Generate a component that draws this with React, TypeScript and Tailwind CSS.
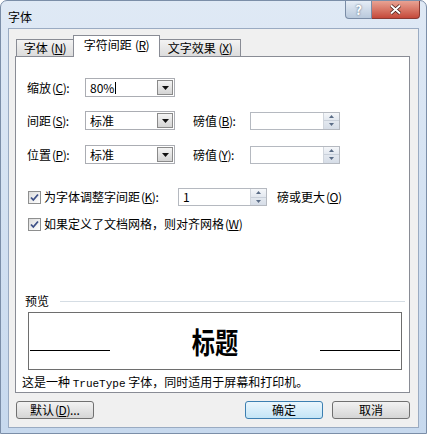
import React from "react";

const font = "font-['Noto_Sans_CJK_SC',sans-serif]";

function Acc({ k, gap }: { k: string; gap?: boolean }) {
  return (
    <span className={`tracking-[-0.5px] ${gap ? "ml-[3px]" : "ml-[1px]"}`}>
      (<span className="underline underline-offset-1">{k}</span>)
    </span>
  );
}

function Select({ value, caret }: { value: string; caret?: boolean }) {
  return (
    <div className="flex h-[19px] w-[90px] border border-[#abadb3] bg-white">
      <div className="flex flex-1 items-center pl-[4px] text-[12px] leading-[17px]">
        {value}
        {caret && <span className="ml-[1px] h-[12px] w-[1px] bg-black" />}
      </div>
      <div className="m-[1px] flex w-[16px] items-center justify-center border border-[#8a8a8a] bg-linear-to-b from-[#f4f4f4] to-[#d4d4d4]">
        <svg width="7" height="4" viewBox="0 0 7 4">
          <path d="M0 0h7L3.5 4z" fill="#111" />
        </svg>
      </div>
    </div>
  );
}

function Spin({ value, w = 90 }: { value?: string; w?: number }) {
  return (
    <div
      className={`flex h-[18px] border border-[#b5b9c0] bg-white ${w === 90 ? "w-[90px]" : "w-[89px]"}`}
    >
      <div className="flex-1 pl-[4px] text-[12px] leading-[16px]">{value}</div>
      <div className="flex w-[16px] flex-col border-l border-[#d0d5dc]">
        <div className="flex flex-1 items-center justify-center bg-linear-to-b from-[#f5f7fa] to-[#e3e8ef]">
          <svg width="5" height="3" viewBox="0 0 5 3">
            <path d="M0 3h5L2.5 0z" fill="#5a6c86" />
          </svg>
        </div>
        <div className="h-px bg-[#c9d0da]" />
        <div className="flex flex-1 items-center justify-center bg-linear-to-b from-[#e3e8ef] to-[#d6dde7]">
          <svg width="5" height="3" viewBox="0 0 5 3">
            <path d="M0 0h5L2.5 3z" fill="#5a6c86" />
          </svg>
        </div>
      </div>
    </div>
  );
}

function Check() {
  return (
    <div className="flex h-[13px] w-[13px] items-center justify-center border border-[#8e8f8f] bg-linear-to-br from-[#dcdcdc] to-[#ffffff]">
      <svg width="9" height="9" viewBox="0 0 9 9">
        <path d="M1 4.5l2.3 2.5L8 1.5" stroke="#3c4f86" strokeWidth="1.8" fill="none" />
      </svg>
    </div>
  );
}

function Button({ label, primary }: { label: React.ReactNode; primary?: boolean }) {
  return (
    <div
      className={`flex h-[18px] w-[78px] items-center justify-center rounded-[3px] border text-[12px] leading-[16px] ${
        primary
          ? "border-[#3c7fb1] bg-linear-to-b from-[#eaf6fd] to-[#c4e5f6]"
          : "border-[#707070] bg-linear-to-b from-[#f2f2f2] to-[#d5d5d5]"
      }`}
    >
      {label}
    </div>
  );
}

export default function App() {
  return (
    <div
      className={`flex h-[434px] w-[427px] flex-col rounded-t-[7px] border border-[#7b8ea8] bg-linear-to-b from-[#dfe9f5] to-[#c7d9ee] text-black ${font}`}
    >
      {/* title bar */}
      <div className="flex h-[28px] items-start justify-between pl-[7px] pr-[6px]">
        <div className="self-center pt-[4px] text-[12px] leading-[16px]">字体</div>
        <div className="flex">
          <div className="flex h-[18px] w-[27px] items-center justify-center rounded-bl-[4px] border border-t-0 border-[#7a8ca6] bg-linear-to-b from-[#e6edf6] to-[#b9c9dc] text-[13px] font-bold leading-none text-white [text-shadow:0_0_2px_#44546a]">
            ?
          </div>
          <div className="flex h-[18px] w-[48px] items-center justify-center rounded-br-[4px] border border-l-0 border-t-0 border-[#8a3a33] bg-linear-to-b from-[#e8a293] to-[#c4483a]">
            <svg width="13" height="11" viewBox="0 0 13 11">
              <path d="M2 1.5l9 8M11 1.5l-9 8" stroke="#3a1410" strokeWidth="3.4" />
              <path d="M2 1.5l9 8M11 1.5l-9 8" stroke="#fff" strokeWidth="2" />
            </svg>
          </div>
        </div>
      </div>

      {/* client area */}
      <div className="mx-[7px] mb-[5px] flex flex-1 flex-col border border-[#9aabc2] bg-[#f0f0f0] pb-[8px] pl-[6px] pr-[8px] pt-[6px]">
        {/* tabs */}
        <div className="relative z-10 flex h-[21px] items-end pl-[1px] text-[12px] leading-[16px]">
          <div className="flex h-[17px] w-[58px] items-center justify-center border border-b-0 border-[#898c95] bg-linear-to-b from-[#f3f3f3] to-[#dcdcdc]">
            字体<Acc k="N" gap />
          </div>
          <div className="-mx-[1px] -mb-px flex h-[22px] w-[87px] items-center justify-center border border-b-0 border-[#898c95] bg-white pb-[3px]">
            字符间距<Acc k="R" gap />
          </div>
          <div className="flex h-[17px] w-[82px] items-center justify-center border border-b-0 border-[#898c95] bg-linear-to-b from-[#f3f3f3] to-[#dcdcdc]">
            文字效果<Acc k="X" gap />
          </div>
        </div>

        {/* panel */}
        <div className="flex h-[337px] flex-col border border-[#898c95] bg-white text-[12px] leading-[16px]">
          <div className="mt-[21px] flex h-[19px] items-center pl-[11px]">
            <div className="w-[58px]">
              缩放<Acc k="C" />:
            </div>
            <Select value="80%" caret />
          </div>

          <div className="mt-[14px] flex h-[19px] items-center pl-[11px]">
            <div className="w-[58px]">
              间距<Acc k="S" />:
            </div>
            <Select value="标准" />
            <div className="ml-[18px] w-[57px]">
              磅值<Acc k="B" />:
            </div>
            <Spin />
          </div>

          <div className="mt-[15px] flex h-[19px] items-center pl-[11px]">
            <div className="w-[58px]">
              位置<Acc k="P" />:
            </div>
            <Select value="标准" />
            <div className="ml-[18px] w-[57px]">
              磅值<Acc k="Y" />:
            </div>
            <Spin />
          </div>

          <div className="mt-[24px] flex h-[18px] items-center pl-[12px]">
            <Check />
            <div className="ml-[3px] w-[134px]">
              为字体调整字间距<Acc k="K" />:
            </div>
            <Spin value="1" w={89} />
            <div className="ml-[10px]">
              磅或更大<Acc k="O" />
            </div>
          </div>

          <div className="mt-[10px] flex h-[16px] items-center pl-[12px]">
            <Check />
            <div className="ml-[3px]">
              如果定义了文档网格，则对齐网格<Acc k="W" />
            </div>
          </div>

          <div className="mt-[61px] flex h-[16px] items-center pl-[9px] pr-[4px]">
            <div>预览</div>
            <div className="ml-[11px] h-0 flex-1 border-t border-[#d5dde4]" />
          </div>

          <div className="ml-[12px] mt-[3px] grid h-[58px] w-[374px] grid-cols-[80px_1fr_80px] border border-[#6e6e6e] px-[1px]">
            <div className="mb-[18px] h-[1px] self-end bg-black" />
            <div className="flex items-center justify-center">
              <span className="inline-block scale-x-80 text-[29px] font-bold leading-none">标题</span>
            </div>
            <div className="mb-[18px] h-[1px] self-end bg-black" />
          </div>

          <div className="mt-[4px] pl-[6px]">
            这是一种 <span className="font-['Liberation_Mono',monospace] text-[11px]">TrueType</span> 字体，同时适用于屏幕和打印机。
          </div>
        </div>

        {/* buttons */}
        <div className="mt-[8px] flex items-center pl-[1px]">
          <Button
            label={
              <>
                默认<Acc k="D" />
                ...
              </>
            }
          />
          <div className="flex-1" />
          <Button label="确定" primary />
          <div className="w-[9px]" />
          <Button label="取消" />
        </div>
      </div>
    </div>
  );
}
